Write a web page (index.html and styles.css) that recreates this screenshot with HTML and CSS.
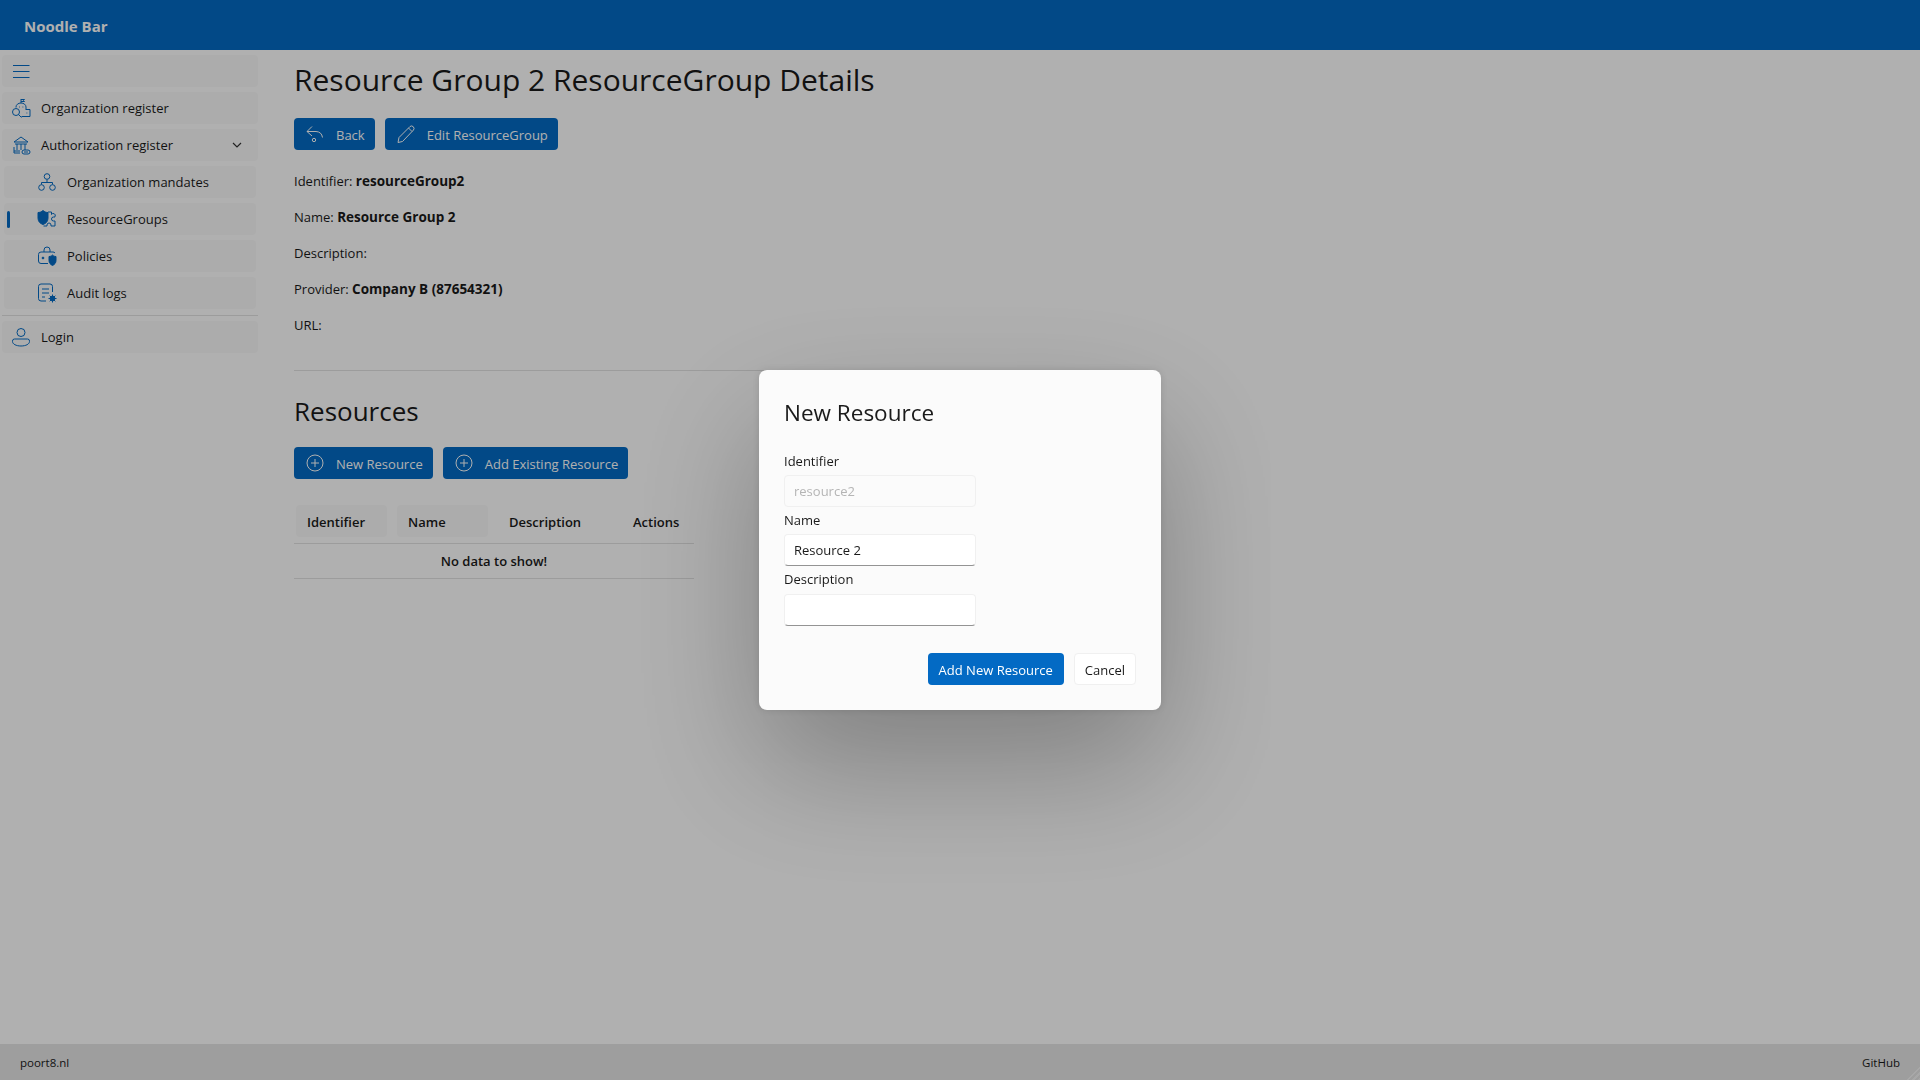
FILE: index.html
```html
<!DOCTYPE html>
<html>
<head>
    <meta charset="utf-8" />
    <title>Noodle Bar</title>
    <link rel="stylesheet" href="styles.css">
</head>
<body>
    <header class="topbar">Noodle Bar</header>
    <div class="shell">
        <nav class="sidebar">
            <div class="navitem toggle">
                <svg class="navicon" viewBox="0 0 20 20"><path d="M2 4.500h16.500M2 10.500h16.500M2 16.500h16.500" /></svg>
            </div>
            <div class="navitem">
                <svg class="navicon" viewBox="0 0 20 20"><path d="M10 1v4M10 1.500h3.500l-1 1 1 1H10M5 9.500V9a5 4 0 0 1 10 0v3M15 11.500h4v7h-8.500M8 9h.8M11.500 9h.8M15.500 15h.8" /><circle cx="5" cy="14" r="3.500" /><path d="M7.500 16.500l3 3" /></svg>
                <span>Organization register</span>
            </div>
            <div class="navitem">
                <svg class="navicon" viewBox="0 0 20 20"><path d="M3 7l7-5 7 5zM4 9h12M6 9v6M10 9v6M14 9v6M3 12v6h6M3 16h6" /><rect x="11" y="15" width="8" height="4" rx="2" /><path d="M13 17h4" /></svg>
                <span>Authorization register</span>
                <svg class="chevron" viewBox="0 0 12 12"><path d="M2 4l4 4 4-4" /></svg>
            </div>
            <div class="navitem sub">
                <svg class="navicon" viewBox="0 0 20 20"><circle cx="10" cy="4.500" r="2.800" /><circle cx="4.500" cy="15.500" r="2.800" /><circle cx="15.500" cy="15.500" r="2.800" /><path d="M10 7.500v3M4.500 12.500v-2h11v2" /></svg>
                <span>Organization mandates</span>
            </div>
            <div class="navitem sub active">
                <svg class="navicon" viewBox="0 0 20 20"><path class="solid" d="M1 3.500c2 0 3.500-.7 5-2 1.500 1.300 3 2 5 2V9c0 3.500-2 5.500-5 6.500C3 14.500 1 12.500 1 9z" /><path d="M11 3h3.500v2.500a2 2 0 0 1 3.500 2v.5h-1.500a2 2 0 0 0 0 4H18v5h-4v-1a2 2 0 0 0-4 0v1H6.500" /></svg>
                <span>ResourceGroups</span>
            </div>
            <div class="navitem sub">
                <svg class="navicon" viewBox="0 0 20 20"><path d="M7 6V4a3 3 0 0 1 6 0v2M11 17.500H4a2.500 2.500 0 0 1-2.500-2.500V8.500A2.500 2.500 0 0 1 4 6h12a2.500 2.500 0 0 1 2 1" /><circle class="solid" cx="6" cy="12" r=".9" /><path class="solid" d="M12 10.500c1.500 0 2.500-.5 3.500-1.500 1 1 2 1.500 3.500 1.500v4c0 2.500-1.500 4-3.500 5-2-1-3.500-2.500-3.500-5z" /></svg>
                <span>Policies</span>
            </div>
            <div class="navitem sub">
                <svg class="navicon" viewBox="0 0 20 20"><path d="M9 18H4a2.500 2.500 0 0 1-2.500-2.500v-12A2.500 2.500 0 0 1 4 1h9a2.500 2.500 0 0 1 2.500 2.500V9M5 6h7M5 10h7M5 14h3" /><circle class="solid" cx="15.500" cy="15.500" r="2.400" /><path d="M15.500 11.500v8M11.500 15.500h8M12.700 12.700l5.600 5.600M18.300 12.700l-5.600 5.600" /></svg>
                <span>Audit logs</span>
            </div>
            <hr class="navrule" />
            <div class="navitem">
                <svg class="navicon" viewBox="0 0 20 20"><circle cx="10" cy="5.500" r="4" /><path d="M3.500 12h13a2 2 0 0 1 2 2v.5c0 2.500-3.500 4.500-8.500 4.500s-8.500-2-8.500-4.500V14a2 2 0 0 1 2-2z" /></svg>
                <span>Login</span>
            </div>
        </nav>
        <main class="content">
            <h1 class="pagetitle">Resource Group 2 ResourceGroup Details</h1>
            <div class="actions">
                <button class="btn">
                    <svg class="btnicon" viewBox="0 0 20 20"><path d="M7 2.500L2 7.500l5 4.500M2 7.500h9a7 7 0 0 1 6.500 6" /><circle cx="9" cy="16" r="1.700" /></svg>
                    Back
                </button>
                <button class="btn">
                    <svg class="btnicon" viewBox="0 0 20 20"><path d="M2 18.500l1-5L14 2.500a2.500 2.500 0 0 1 3.500 3.500L6.500 17.500zM12.500 4l3.500 3.500" /></svg>
                    Edit ResourceGroup
                </button>
            </div>
            <p class="field">Identifier: <b>resourceGroup2</b></p>
            <p class="field">Name: <b>Resource Group 2</b></p>
            <p class="field">Description:</p>
            <p class="field">Provider: <b>Company B (87654321)</b></p>
            <p class="field">URL:</p>
            <hr class="rule" />
            <h2 class="subtitle">Resources</h2>
            <div class="actions">
                <button class="btn">
                    <svg class="btnicon" viewBox="0 0 20 20"><circle cx="10" cy="10" r="8" /><path d="M10 6v8M6 10h8" /></svg>
                    New Resource
                </button>
                <button class="btn">
                    <svg class="btnicon" viewBox="0 0 20 20"><circle cx="10" cy="10" r="8" /><path d="M10 6v8M6 10h8" /></svg>
                    Add Existing Resource
                </button>
            </div>
            <table class="grid">
                <thead>
                    <tr>
                        <th class="col-id"><span class="headcell shaded">Identifier</span></th>
                        <th class="col-name"><span class="headcell shaded">Name</span></th>
                        <th class="col-desc"><span class="headcell">Description</span></th>
                        <th><span class="headcell">Actions</span></th>
                    </tr>
                </thead>
                <tbody>
                    <tr><td colspan="4">No data to show!</td></tr>
                </tbody>
            </table>
        </main>
    </div>
    <footer class="bottombar">
        <span>poort8.nl</span>
        <span>GitHub</span>
    </footer>
    <div class="resizer"></div>

    <div class="scrim"></div>
    <div class="dialog">
        <h2 class="dialogtitle">New Resource</h2>
        <label class="fieldlabel">Identifier</label>
        <input class="textbox" type="text" placeholder="resource2" disabled />
        <label class="fieldlabel">Name</label>
        <input class="textbox" type="text" value="Resource 2" />
        <label class="fieldlabel">Description</label>
        <input class="textbox" type="text" />
        <div class="dialogactions">
            <button class="btn accent">Add New Resource</button>
            <button class="btn plain">Cancel</button>
        </div>
    </div>
</body>
</html>
```

FILE: styles.css
```css
*
{
    box-sizing: border-box;
}

body
{
    margin: 0;
    height: 1080px;
    overflow: hidden;
    display: flex;
    flex-direction: column;
    background: #ffffff;
    color: #1a1a1a;
    font: 13px/20px "Open Sans", sans-serif;
}

.topbar
{
    height: 50px;
    flex: none;
    padding: 0 24px;
    background: #036ac4;
    color: #ffffff;
    font-size: 15px;
    font-weight: 700;
    line-height: 52px;
}

.shell
{
    flex: 1;
    display: flex;
}

.sidebar
{
    width: 260px;
    flex: none;
    padding: 5px 2px 0;
    display: flex;
    flex-direction: column;
    gap: 5px;
}

.navitem
{
    position: relative;
    height: 32px;
    display: flex;
    align-items: center;
    gap: 10px;
    padding: 0 9px;
    border-radius: 4px;
    background: #fafafa;
}

.navitem.sub
{
    margin: 0 2px;
    padding-left: 33px;
    gap: 10px;
}

.navitem.active::before
{
    content: "";
    position: absolute;
    left: 3px;
    top: 8px;
    width: 3px;
    height: 17px;
    border-radius: 2px;
    background: #036ac4;
}

.navicon
{
    width: 20px;
    height: 20px;
    flex: none;
    fill: none;
    stroke: #036ac4;
    stroke-width: 1;
}

.navicon .solid
{
    fill: #036ac4;
}

.chevron
{
    width: 12px;
    height: 12px;
    margin-left: auto;
    margin-right: 6px;
    fill: none;
    stroke: #333333;
    stroke-width: 1.2;
}

.navrule
{
    width: 100%;
    margin: 1px 0 0;
    border: 0;
    border-top: 1px solid #e2e2e2;
}

.content
{
    flex: 1;
    padding: 8px 34px 0;
}

.pagetitle
{
    margin: 0 0 16px;
    font-size: 30px;
    font-weight: 400;
    line-height: 44px;
}

.actions
{
    display: flex;
    gap: 10px;
}

.btn
{
    height: 32px;
    display: flex;
    align-items: center;
    gap: 11px;
    padding: 2px 10px 0 11px;
    border: 0;
    border-radius: 4px;
    background: #036ac4;
    color: #ffffff;
    font: inherit;
}

.btnicon
{
    width: 20px;
    height: 20px;
    margin-top: -2px;
    fill: none;
    stroke: #ffffff;
    stroke-width: 1;
}

.field
{
    margin: 16px 0;
}

.actions + .field
{
    margin-top: 21px;
}

.field b
{
    font-size: 13.500px;
    font-weight: 700;
}

.rule
{
    width: 800px;
    margin: 35px 0 0;
    border: 0;
    border-top: 1px solid #e2e2e2;
}

.subtitle
{
    margin: 21px 0 17px;
    font-size: 26px;
    font-weight: 400;
    line-height: 38px;
}

.grid
{
    width: 400px;
    margin-top: 26px;
    table-layout: fixed;
    border-collapse: collapse;
}

.col-id,
.col-name
{
    width: 101px;
}

.col-desc
{
    width: 124px;
}

.grid th
{
    padding: 0 8px 6px 2px;
    border-bottom: 1px solid #e2e2e2;
    font-weight: 600;
    text-align: left;
}

.headcell
{
    display: block;
    height: 32px;
    padding: 7px 11px 5px;
    border-radius: 4px;
    white-space: nowrap;
}

.headcell.shaded
{
    background: #fafafa;
}

.grid td
{
    height: 35px;
    padding-top: 1px;
    border-bottom: 1px solid #e2e2e2;
    font-weight: 600;
    text-align: center;
}

.bottombar
{
    height: 36px;
    flex: none;
    display: flex;
    justify-content: space-between;
    align-items: center;
    padding: 2px 20px 0;
    background: #e5e5e5;
    font-size: 11.500px;
}

.resizer
{
    position: fixed;
    right: 0;
    bottom: 0;
    width: 14px;
    height: 14px;
    background: repeating-linear-gradient(135deg, transparent 0 2px, #f4f4f4 2px 4px);
    clip-path: polygon(100% 0, 100% 100%, 0 100%);
}

.scrim
{
    position: fixed;
    inset: 0;
    background: rgba(0, 0, 0, 0.31);
}

.dialog
{
    position: fixed;
    left: 759px;
    top: 370px;
    width: 402px;
    height: 340px;
    display: flex;
    flex-direction: column;
    padding: 25px;
    border-radius: 8px;
    background: #fbfbfb;
    box-shadow: 0 0 9px rgba(0, 0, 0, 0.12), 0 55px 130px rgba(0, 0, 0, 0.28);
}

.dialogtitle
{
    margin: 0 0 22px;
    font-size: 22.500px;
    font-weight: 400;
    line-height: 35px;
}

.fieldlabel
{
    height: 23.200px;
    line-height: 19px;
}

.textbox
{
    width: 192px;
    height: 32px;
    flex: none;
    margin-bottom: 4px;
    padding: 0 9px;
    border: 1px solid #f0f0f0;
    border-bottom-color: #949494;
    border-radius: 4px;
    background: #ffffff;
    color: #1a1a1a;
    font: inherit;
}

.textbox:disabled
{
    background: #fbfbfb;
    border-color: #f0f0f0;
}

.textbox::placeholder
{
    color: #b5b5b5;
}

.dialogactions
{
    display: flex;
    justify-content: flex-end;
    gap: 10px;
    margin-top: 23px;
}

.btn.accent
{
    padding: 2px 11px 0;
}

.btn.plain
{
    padding: 2px 10px 0;
    border: 1px solid #f0f0f0;
    background: #ffffff;
    color: #1a1a1a;
}
```
